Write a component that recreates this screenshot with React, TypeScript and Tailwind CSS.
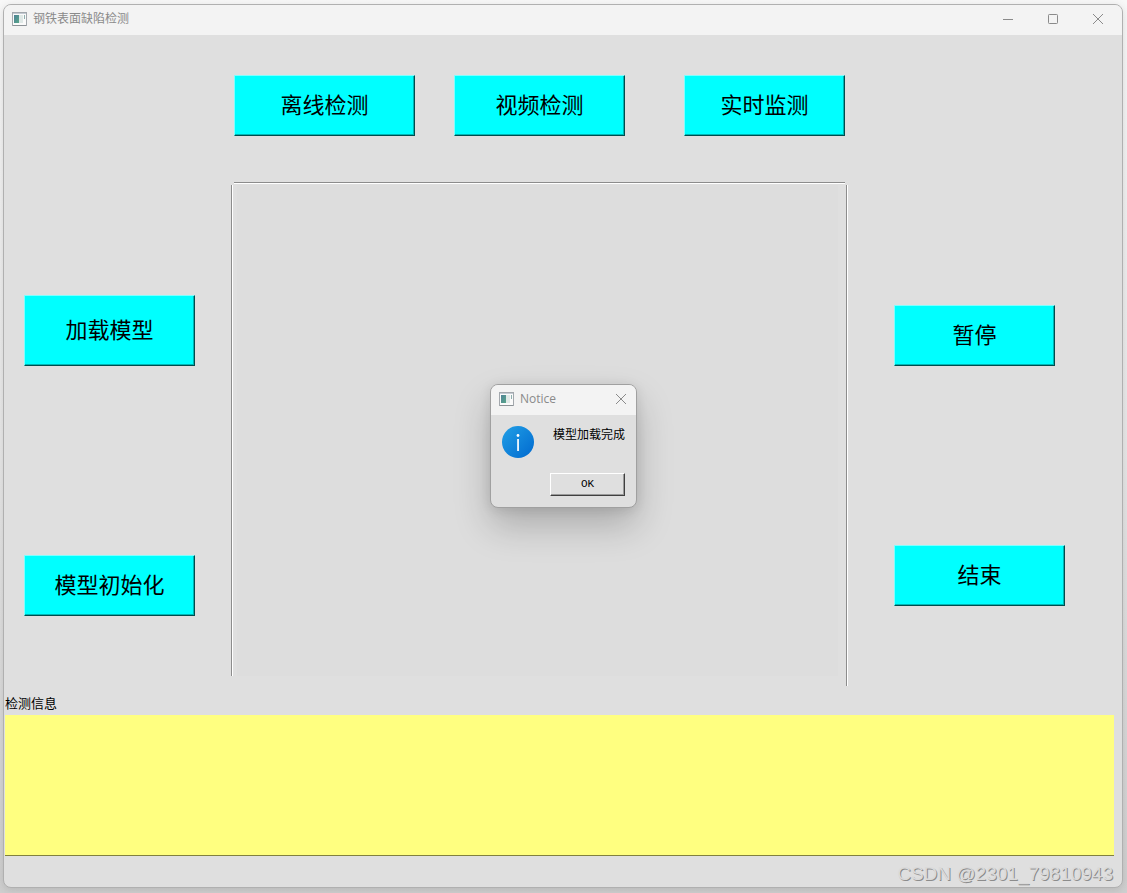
import { useState } from 'react';
import { clsx } from 'clsx';

const TITLE_FONT = "font-['Open_Sans','Noto_Sans_CJK_SC',sans-serif]";
const BODY_FONT = "font-['Liberation_Sans','Noto_Sans_CJK_SC',sans-serif]";

export default function App() {
  const [noticeOpen, setNoticeOpen] = useState(true);

  return (
    <div
      className={clsx(
        'relative flex min-h-screen flex-col bg-linear-to-b from-[#f8f8f8] via-[#e8e8e8] to-[#cfcfcf] pt-1 pr-1 pb-[5px] pl-[3px] text-black',
        BODY_FONT,
      )}
    >
      <div className="flex flex-1 flex-col overflow-hidden rounded-lg border border-[#b0b0b0] bg-[#dfdfdf] shadow-[0_2px_8px_rgba(0,0,0,0.12)]">
        {/* Title bar */}
        <header className={clsx('flex h-[30px] items-center bg-[#f3f3f3] pb-0.5 pl-2 text-[#8a8a8a]', TITLE_FONT)}>
          <AppIcon />
          <h1 className="ml-[6px] flex-1 text-xs">钢铁表面缺陷检测</h1>
          <WindowControls />
        </header>

        <main className="flex flex-1 flex-col">
          <div className="flex">
            <div className="flex w-[228px] shrink-0 flex-col items-start pt-[260px] pl-5">
              <TkButton label="加载模型" className="h-[71px] w-[171px]" />
              <TkButton label="模型初始化" className="mt-[189px] h-[61px] w-[171px]" />
            </div>

            <div className="flex flex-1 flex-col pt-10">
              <div className="flex gap-[39px] pl-[2px]">
                <TkButton label="离线检测" className="h-[61px] w-[181px]" />
                <TkButton label="视频检测" className="h-[61px] w-[171px]" />
                <TkButton label="实时监测" className="ml-5 h-[61px] w-[161px]" />
              </div>
              <ImageFrame />
            </div>

            <div className="flex w-[274px] shrink-0 flex-col items-start pt-[270px] pl-[46px]">
              <TkButton label="暂停" className="h-[61px] w-[161px]" />
              <TkButton label="结束" className="mt-[179px] h-[61px] w-[171px]" />
            </div>
          </div>

          {/* Detection log */}
          <div className="mt-2 flex flex-col pr-2 pl-px">
            <label htmlFor="detect-info" className="h-[21px] text-[13px] leading-5">
              检测信息
            </label>
            <textarea
              id="detect-info"
              readOnly
              className="block h-[141px] w-full resize-none border-b border-[#80803f] bg-[#ffff80] p-1 text-[13px] outline-none"
            />
          </div>
        </main>
      </div>

      <p className="absolute right-[14px] bottom-[7px] text-[19px] leading-6 text-[#dadada] [text-shadow:1px_1px_0_#8c8c8c]">
        CSDN @2301_79810943
      </p>

      {noticeOpen && <Notice onClose={() => setNoticeOpen(false)} />}
    </div>
  );
}

function TkButton({ label, className }: { label: string; className: string }) {
  return (
    <button
      type="button"
      className={clsx(
        'shrink-0 border border-t-[#7fffff] border-r-[#004d4d] border-b-[#004d4d] border-l-[#7fffff] bg-[#00ffff] text-[22px] shadow-[inset_-1px_-1px_0_#00b4b4]',
        className,
      )}
    >
      {label}
    </button>
  );
}

/* Three grooved lines, open at the bottom; the right one runs lower */
function ImageFrame() {
  return (
    <div className="mt-[46px] -ml-px flex flex-col">
      <div className="mr-[3px] ml-[3px] h-[2px] border-t border-[#8c8c8c] bg-white" />
      <div className="mt-px flex h-[501px] items-start">
        <div className="h-[491px] w-[2px] border-l border-[#8c8c8c] bg-white" />
        <div className="mr-2 ml-1 h-[491px] flex-1 bg-[#dddddd]" />
        <div className="h-full w-[2px] border-l border-[#8c8c8c] bg-white" />
      </div>
    </div>
  );
}

function Notice({ onClose }: { onClose: () => void }) {
  return (
    <div className="absolute inset-0 flex items-center justify-center pb-0.5">
      <div
        role="dialog"
        aria-labelledby="notice-title"
        className="w-[147px] overflow-hidden rounded-lg border border-[#a0a0a0] bg-[#dfdfdf] shadow-[0_18px_36px_rgba(0,0,0,0.22),0_2px_12px_rgba(0,0,0,0.1)]"
      >
        <div className={clsx('flex h-[30px] items-center bg-[#f3f3f3] pr-[9px] pb-0.5 pl-2 text-[#8a8a8a]', TITLE_FONT)}>
          <AppIcon />
          <h2 id="notice-title" className="ml-[6px] flex-1 text-xs">
            Notice
          </h2>
          <button type="button" aria-label="Close" onClick={onClose}>
            <CloseIcon />
          </button>
        </div>
        <div className="flex items-start justify-between pt-[11px] pr-[11px] pl-[11px]">
          <InfoIcon />
          <p className="text-xs leading-[18px]">模型加载完成</p>
        </div>
        <div className="flex justify-end pt-[15px] pr-[11px] pb-[11px]">
          <button
            type="button"
            onClick={onClose}
            className="h-[23px] w-[75px] border border-t-white border-r-[#404040] border-b-[#404040] border-l-white font-['Liberation_Mono',monospace] text-[11px] shadow-[inset_-1px_-1px_0_#9a9a9a]"
          >
            OK
          </button>
        </div>
      </div>
    </div>
  );
}

function WindowControls() {
  return (
    <div className="flex pr-px">
      <button type="button" aria-label="Minimize" className="flex h-7 w-[45px] items-center justify-center">
        <svg width="12" height="12" viewBox="0 0 12 12" fill="none" stroke="currentColor">
          <path d="M1 6.5H11" />
        </svg>
      </button>
      <button type="button" aria-label="Maximize" className="flex h-7 w-[45px] items-center justify-center">
        <svg width="12" height="12" viewBox="0 0 12 12" fill="none" stroke="currentColor">
          <rect x="1.5" y="1.5" width="9" height="9" rx="0.8" />
        </svg>
      </button>
      <button type="button" aria-label="Close" className="flex h-7 w-[46px] items-center justify-center">
        <CloseIcon />
      </button>
    </div>
  );
}

function CloseIcon() {
  return (
    <svg width="12" height="12" viewBox="0 0 12 12" fill="none" stroke="currentColor">
      <path d="M1 1L11 11M11 1L1 11" />
    </svg>
  );
}

function AppIcon() {
  return (
    <svg width="15" height="14" viewBox="0 0 15 14" className="shrink-0">
      <defs>
        <linearGradient id="pane" x1="0" y1="0" x2="1" y2="1">
          <stop offset="0" stopColor="#4f8296" />
          <stop offset="1" stopColor="#57a58a" />
        </linearGradient>
      </defs>
      <rect x="0.5" y="0.5" width="14" height="13" fill="#fafafa" stroke="#a3a8ad" />
      <path d="M1 1.5H14" stroke="#c3cad2" />
      <rect x="2" y="3" width="5" height="8" fill="url(#pane)" />
      <rect x="7" y="3" width="4" height="8" fill="#dfe8e6" />
      <rect x="12" y="3" width="1" height="4" fill="#8fb0ae" />
      <path d="M1 13.5H14" stroke="#8c9296" />
    </svg>
  );
}

function InfoIcon() {
  return (
    <svg width="32" height="32" viewBox="0 0 32 32" className="shrink-0">
      <defs>
        <linearGradient id="info" x1="0" y1="0" x2="1" y2="1">
          <stop offset="0" stopColor="#22a0e6" />
          <stop offset="1" stopColor="#0069cf" />
        </linearGradient>
      </defs>
      <circle cx="16" cy="16" r="16" fill="url(#info)" />
      <circle cx="16" cy="9.5" r="1.4" fill="#fff" />
      <rect x="15.2" y="13" width="1.7" height="12" fill="#fff" />
    </svg>
  );
}
